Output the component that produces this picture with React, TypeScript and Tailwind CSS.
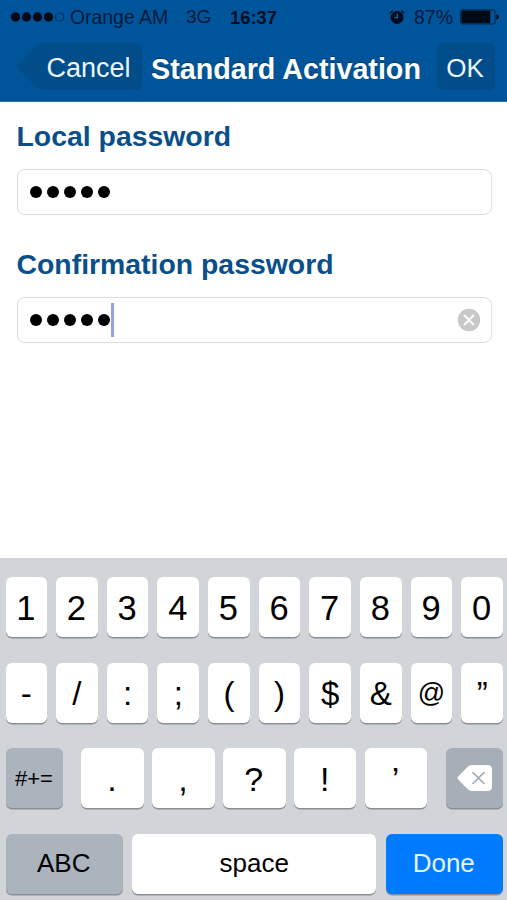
import React, { useState } from 'react';

type KeyProps = {
  children: React.ReactNode;
  className?: string;
  onPress?: () => void;
};

const Key: React.FC<KeyProps> = ({ children, className = '', onPress }) => (
  <button
    onClick={onPress}
    className={`flex h-[60px] items-center justify-center rounded-[6px] leading-none shadow-[0_1.5px_0_#8b8e93] ${className}`}
  >
    {children}
  </button>
);

const SignalDots: React.FC = () => (
  <svg width="55" height="12" viewBox="0 0 55 12">
    {[5.5, 16.5, 27.5, 38.5].map((x) => (
      <circle key={x} cx={x} cy="6" r="4.7" fill="#000a18" />
    ))}
    <circle cx="49.6" cy="6" r="4.1" fill="none" stroke="#002a54" strokeWidth="1" />
  </svg>
);

const AlarmIcon: React.FC = () => (
  <svg width="16" height="16" viewBox="0 0 16 16" fill="none" stroke="#000c1c">
    <circle cx="8" cy="8.4" r="6.5" fill="#000c1c" stroke="none" />
    <path d="M1 4 3.600 1.600M15 4 12.400 1.600" strokeWidth="1.1" strokeLinecap="round" />
    <path d="M8.4 4.8v3.9H5.6" stroke="#1a68a8" strokeWidth="1.3" />
  </svg>
);

const BatteryIcon: React.FC = () => (
  <svg width="40" height="16" viewBox="0 0 40 16">
    <rect x="0.6" y="0.8" width="34.5" height="14.2" rx="2" fill="none" stroke="#00274d" strokeWidth="1" />
    <rect x="1.4" y="1.6" width="29" height="12.6" rx="1" fill="#000a14" />
    <path d="M36.4 4.9c1.5.6 2.4 1.7 2.4 3s-.9 2.4-2.4 3z" fill="#000a14" />
  </svg>
);

const PasswordDots: React.FC<{ count: number }> = ({ count }) => (
  <div className="flex gap-[4.9px]">
    {Array.from({ length: count }, (_, i) => (
      <span key={i} className="size-[12px] rounded-full bg-black" />
    ))}
  </div>
);

const App: React.FC = () => {
  const [local] = useState('12345');
  const [confirmation, setConfirmation] = useState('12345');

  const numberRow = ['1', '2', '3', '4', '5', '6', '7', '8', '9', '0'];
  const symbolRow = ['-', '/', ':', ';', '(', ')', '$', '&', '@', '”'];
  const punctuationRow = ['.', ',', '?', '!', '’'];

  const type = (char: string) => setConfirmation(confirmation + char);

  return (
    <div className="flex h-[900px] w-[507px] flex-col overflow-hidden bg-white font-['Liberation_Sans',Arial,sans-serif]">
      {/* Status bar and navigation */}
      <header className="h-[102px] shrink-0 border-b border-[#2a6da8] bg-[#00559a]">
        <div className="flex h-[34px] items-center pl-[10px] text-[19px] text-[#001b3a]">
          <SignalDots />
          <span className="ml-[5px] w-[116px] pt-px text-[19.4px] whitespace-nowrap">Orange AM</span>
          <span className="w-[44px] pt-px">3G</span>
          <span className="w-[159px] pt-px text-[18.4px] font-bold text-[#001026]">16:37</span>
          <AlarmIcon />
          <span className="ml-[9px] w-[46px] pt-px text-[19.5px]">87%</span>
          <BatteryIcon />
        </div>

        <div className="mt-[9px] flex h-[47px] items-center">
          <button className="relative ml-[15px] h-[47px] w-[127px] pt-[3px] text-[27px] leading-none text-[#eef7ff]">
            <svg className="absolute inset-0" width="127" height="47" viewBox="0 0 127 47">
              <path d="M1 23.5 20 4Q24 0 29 0h92q6 0 6 6v35q0 6-6 6H29q-5 0-9-4z" fill="#004d89" />
            </svg>
            <span className="relative left-[10px]">Cancel</span>
          </button>
          <h1 className="mt-[6px] ml-[9px] w-[286px] text-[28.7px] leading-none font-bold whitespace-nowrap text-white [text-shadow:0_-1px_1px_#003a6b]">
            Standard Activation
          </h1>
          <button className="h-[47px] w-[58px] rounded-[5px] bg-[#004d89] pr-[2px] pt-[2px] text-[26px] leading-none text-[#eef7ff]">
            OK
          </button>
        </div>
      </header>

      {/* Password form */}
      <main className="flex-1 pt-[19px] pr-[15px] pl-[16.5px]">
        <label className="block h-[48px] text-[28.4px] leading-[30px] font-bold text-[#0b4f8a]">
          Local password
        </label>
        <div className="flex h-[46px] items-center rounded-[8px] border-[1.5px] border-[#dedede] pb-px pl-[12.5px]">
          <PasswordDots count={local.length} />
        </div>

        <label className="mt-[34px] block h-[48px] text-[28.4px] leading-[30px] font-bold text-[#0b4f8a]">
          Confirmation password
        </label>
        <div className="flex h-[46px] items-center rounded-[8px] border-[1.5px] border-[#dedede] pr-[10px] pb-px pl-[12.5px]">
          <PasswordDots count={confirmation.length} />
          <span className="ml-[1px] h-[34px] w-[3px] bg-[#98a1e3]" />
          <button className="ml-auto" onClick={() => setConfirmation('')}>
            <svg width="24" height="24" viewBox="0 0 24 24">
              <circle cx="12" cy="12" r="11.2" fill="#c8c8c8" />
              <path d="m7 7 10 10M17 7 7 17" stroke="#fff" strokeWidth="1.8" />
            </svg>
          </button>
        </div>
      </main>

      {/* Keyboard */}
      <section className="flex h-[342px] shrink-0 flex-col gap-[25.6px] bg-[#d1d5da] pt-[19px] pr-[4px] pl-[5.5px] text-black">
        <div className="flex justify-between">
          {numberRow.map((char) => (
            <Key key={char} onPress={() => type(char)} className="w-[41.5px] bg-white pt-[3px] pr-px text-[34.5px]">
              {char}
            </Key>
          ))}
        </div>

        <div className="flex justify-between">
          {symbolRow.map((char) => (
            <Key
              key={char}
              onPress={() => type(char)}
              className={`w-[41.5px] bg-white pt-[2px] ${char === '@' ? 'text-[27px]' : 'text-[33px]'}`}
            >
              {char}
            </Key>
          ))}
        </div>

        <div className="flex justify-between">
          <Key className="w-[57px] bg-[#abb4bd] pt-px text-[22px]">#+=</Key>
          <div className="flex gap-[8.4px]">
            {punctuationRow.map((char) => (
              <Key key={char} onPress={() => type(char)} className="w-[62.5px] bg-white pt-px pr-px text-[34px]">
                {char}
              </Key>
            ))}
          </div>
          <Key className="w-[57px] bg-[#a6afb8]" onPress={() => setConfirmation(confirmation.slice(0, -1))}>
            <svg width="36" height="26" viewBox="0 0 36 26">
              <path d="M1.2 11.5 10.5 2Q12.5 0 15 0h15.5Q35 0 35 4.5v17q0 4.5-4.5 4.500H15q-2.500 0-4.500-2l-9.300-9.500q-1.500-1.500 0-3z" fill="#fff" />
              <path d="m15.5 7.2 12 11.8M27.5 7.2l-12 11.8" stroke="#a3abb4" strokeWidth="1.7" />
            </svg>
          </Key>
        </div>

        <div className="flex justify-between">
          <Key className="w-[117.5px] bg-[#abb4bd] pr-px pb-px text-[26px]">ABC</Key>
          <Key className="w-[244px] bg-white pb-px text-[26px]" onPress={() => type(' ')}>
            space
          </Key>
          <Key className="w-[117.5px] bg-[#007aff] pr-px pb-px text-[26px] text-[#e3f4ff]">Done</Key>
        </div>
      </section>
    </div>
  );
};

export default App;
